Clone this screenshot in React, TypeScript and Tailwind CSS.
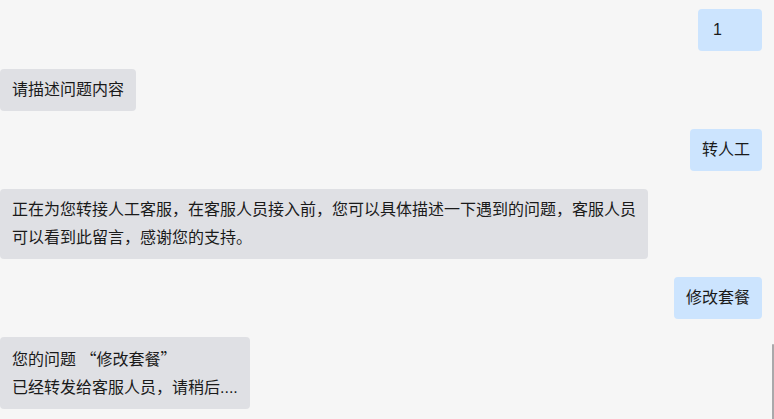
type Msg = { from: "me" | "bot"; lines: string[]; extra?: string };

const messages: Msg[] = [
  { from: "me", lines: ["1"], extra: "w-[64px] pl-[15px]" },
  { from: "bot", lines: ["请描述问题内容"] },
  { from: "me", lines: ["转人工"] },
  {
    from: "bot",
    lines: [
      "正在为您转接人工客服，在客服人员接入前，您可以具体描述一下遇到的问题，客服人员可以看到此留言，感谢您的支持。",
    ],
  },
  { from: "me", lines: ["修改套餐"] },
  { from: "bot", lines: ["您的问题 “修改套餐”", "已经转发给客服人员，请稍后...."] },
];

function Bubble({ msg }: { msg: Msg }) {
  const mine = msg.from === "me";
  return (
    <div className={`flex ${mine ? "justify-end pr-3" : "justify-start"}`}>
      <div
        className={`${mine ? "bg-[#cce4fe]" : "bg-[#dfe0e4]"} ${
          msg.extra ?? "px-3"
        } max-w-[648px] rounded py-[7px] text-base leading-7 text-[#1a1a1a]`}
      >
        {msg.lines.map((l, i) => (
          <div key={i} className="whitespace-pre-wrap">
            {l.split(/([“”])/).map((part, j) =>
              part === "“" || part === "”" ? (
                <span key={j} className="font-['Noto_Sans_CJK_SC']">
                  {part}
                </span>
              ) : (
                part
              )
            )}
          </div>
        ))}
      </div>
    </div>
  );
}

export default function App() {
  return (
    <div
      className="relative h-[419px] w-full overflow-hidden bg-[#f6f6f6]"
      style={{ fontFamily: '"Liberation Sans", "Noto Sans CJK SC", sans-serif' }}
    >
      <div className="flex flex-col gap-[18px] pt-[9px]">
        {messages.map((m, i) => (
          <Bubble key={i} msg={m} />
        ))}
      </div>
      <div className="absolute right-0 top-[344px] h-[80px] w-[2px] rounded-t bg-[#a9a9ab]" />
    </div>
  );
}
